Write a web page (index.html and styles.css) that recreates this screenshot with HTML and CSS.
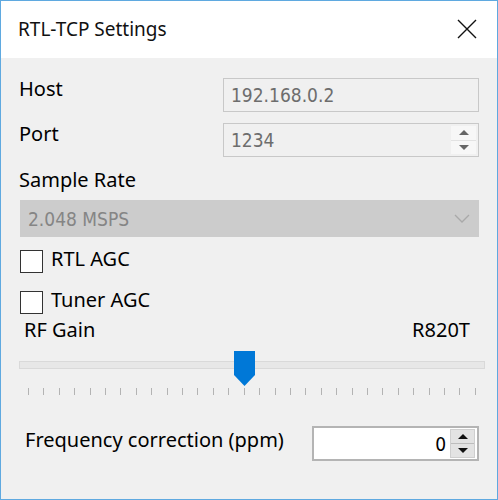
FILE: index.html
```html
<!DOCTYPE html>
<html lang="en">
<head>
  <meta charset="UTF-8">
  <title>RTL-TCP Settings</title>
  <link rel="stylesheet" href="styles.css">
</head>
<body>
  <div class="window">
    <div class="titlebar">
      <span class="title">RTL-TCP Settings</span>
      <svg class="close" width="20" height="20" viewBox="0 0 20 20">
        <path d="M1 1 L19 19 M19 1 L1 19" stroke="#111" stroke-width="1.4" fill="none"/>
      </svg>
    </div>

    <div class="content">
      <div class="field">
        <span class="label">Host</span>
        <div class="textbox disabled"><span class="value">192.168.0.2</span></div>
      </div>
      <div class="field">
        <span class="label">Port</span>
        <div class="textbox disabled">
          <span class="value">1234</span>
          <div class="spin spin-off">
            <span class="arrow up"></span>
            <span class="arrow down"></span>
          </div>
        </div>
      </div>

      <div class="section-label">Sample Rate</div>
      <div class="combo disabled">
        <span class="value">2.048 MSPS</span>
        <svg class="chevron" width="16" height="10" viewBox="0 0 16 10">
          <path d="M1 1 L8 8 L15 1" stroke="#a9a9a9" stroke-width="1.3" fill="none"/>
        </svg>
      </div>

      <label class="check"><span class="box"></span><span>RTL AGC</span></label>
      <label class="check second"><span class="box"></span><span>Tuner AGC</span></label>

      <div class="gain-head">
        <span>RF Gain</span>
        <span>R820T</span>
      </div>

      <div class="slider" id="gainSlider">
        <div class="track"></div>
        <svg class="thumb" id="thumb" width="21" height="36" viewBox="0 0 21 36">
          <polygon points="0,0 21,0 21,24 10.5,35 0,24" fill="#0078d7"/>
        </svg>
        <div class="ticks" id="ticks"></div>
      </div>

      <div class="freq-row">
        <span class="label">Frequency correction (ppm)</span>
        <div class="textbox white">
          <span class="value right">0</span>
          <div class="spin spin-on">
            <span class="arrow up"></span>
            <span class="arrow down"></span>
          </div>
        </div>
      </div>
    </div>
  </div>

  <script>
    // 29 gain steps for the R820T, value 14 selected
    const tickCount = 30, gainIdx = 14;
    const ticks = document.getElementById('ticks');
    for (let i = 0; i < tickCount; i++) {
      const t = document.createElement('span');
      t.className = 'tick';
      ticks.appendChild(t);
    }
    const first = ticks.offsetLeft + ticks.firstChild.offsetLeft;
    const last = ticks.offsetLeft + ticks.lastChild.offsetLeft;
    const x = first + (last - first) * gainIdx / (tickCount - 1);
    document.getElementById('thumb').style.left = Math.round(x - 10) + 'px';
  </script>
</body>
</html>
```

FILE: styles.css
```css
body { margin: 0; font-family: "Noto Sans", "Open Sans", sans-serif; color: #000; background: #fff; }
.window { width: 498px; height: 500px; box-sizing: border-box; border: 1px solid #5fa9e0; background: #f0f0f0; display: flex; flex-direction: column; }
.titlebar { height: 57px; background: #fff; display: flex; align-items: center; justify-content: space-between; padding: 0 20px 0 17px; flex-shrink: 0; }
.title { font-size: 19px; color: #111; margin-top: -2px; }
.close { display: block; margin-top: -1px; }

.content { padding: 20px 18px 0 18px; font-size: 20px; }
.field { display: grid; grid-template-columns: 1fr 256px; height: 34px; margin-bottom: 11px; }
.label { line-height: 22px; }

.textbox { position: relative; box-sizing: border-box; height: 100%; border: 1px solid #b9b9b9; display: flex; align-items: center; padding: 0 7px; }
.textbox.disabled { background: #f0f0f0; border-color: #c8c8c8; }
.textbox.white { background: #fff; border: 2px solid #b4b4b4; }
.value { font-family: "DejaVu Sans Condensed", "DejaVu Sans", sans-serif; font-stretch: condensed; font-size: 19px; color: #6d6d6d; }
.value.right { color: #000; margin-left: auto; margin-right: 24px; }

.spin { position: absolute; right: 2px; top: 2px; bottom: 2px; width: 25px; display: flex; flex-direction: column; }
.spin .arrow { flex: 1; display: flex; align-items: center; justify-content: center; }
.spin .arrow::before { content: ""; border-left: 5px solid transparent; border-right: 5px solid transparent; }
.spin .up::before { border-bottom: 5px solid #666; }
.spin .down::before { border-top: 5px solid #666; }
.spin-off { background: #f7f7f7; }
.spin-off .up { border-bottom: 1px solid #e2e2e2; }
.spin-on { top: 1px; bottom: 1px; background: #e3e3e3; border: 1px solid #cfcfcf; box-sizing: border-box; }
.spin-on .up { border-bottom: 1px solid #bdbdbd; }
.spin-on .up::before { border-bottom-color: #111; }
.spin-on .down::before { border-top-color: #111; }

.section-label { margin-top: 2px; line-height: 24px; }
.combo { margin: 8px 0 0 1px; height: 37px; background: #cccccc; display: flex; align-items: center; justify-content: space-between; padding: 0 9px 0 8px; }
.combo .value { color: #858585; }

.check { display: flex; align-items: flex-start; gap: 8px; height: 23px; margin: 13px 0 0 1px; line-height: 18px; }
.check.second { margin-top: 18px; }
.check .box { width: 21px; height: 21px; border: 1px solid #333; background: #fff; flex-shrink: 0; }

.gain-head { display: flex; justify-content: space-between; line-height: 24px; margin-top: 4px; padding: 0 9px 0 5px; }

.slider { position: relative; height: 46px; margin: 8px -6px 0 0; }
.track { position: absolute; left: 0; right: 0; top: 11px; height: 8px; box-sizing: border-box; border: 1px solid #d9d9d9; background: #e7e7e7; }
.thumb { position: absolute; top: 1px; }
.ticks { position: absolute; left: 9px; right: 9px; top: 38px; display: flex; justify-content: space-between; }
.tick { width: 1px; height: 7px; background: #b3b3b3; }

.freq-row { display: grid; grid-template-columns: 1fr 167px; height: 35px; margin-top: 30px; }
.freq-row .label { padding-left: 6px; line-height: 28px; }
```
